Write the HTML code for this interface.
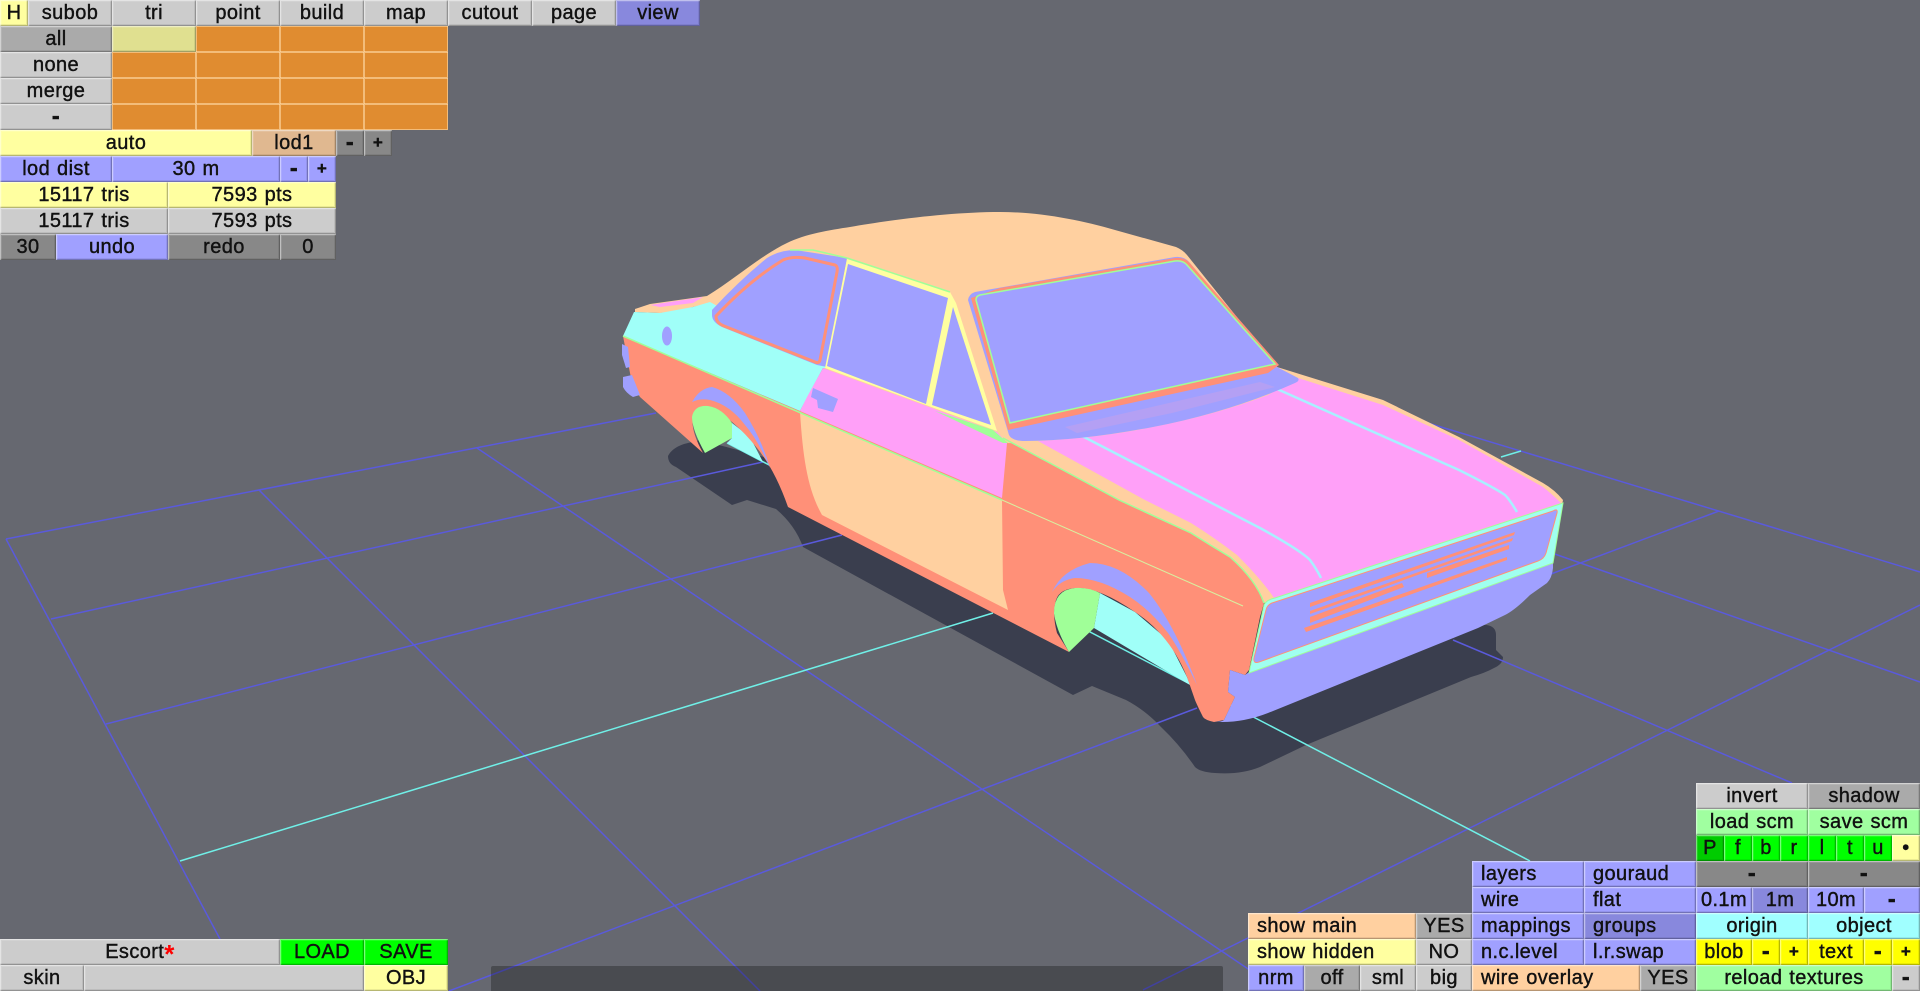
<!DOCTYPE html>
<html><head><meta charset="utf-8"><title>Escort</title>
<style>
html,body{margin:0;padding:0;width:1920px;height:991px;overflow:hidden;background:#666870}
svg{position:absolute;left:0;top:0}
.b{position:absolute;height:26px;box-sizing:border-box;text-align:center;font:20px/26px "Liberation Sans",sans-serif;letter-spacing:.4px;word-spacing:1px;color:#111;-webkit-text-stroke:.4px #111;white-space:nowrap;overflow:hidden;box-shadow:inset 1px 1px 0 rgba(255,255,255,.4),inset -1px -1px 0 rgba(0,0,0,.22),inset 2px 2px 0 rgba(255,255,255,.12),inset -2px -2px 0 rgba(0,0,0,.08)}
.g{background:#ccc}.d{background:#aaa}.k{background:#888}.y{background:#ffffa0}.l{background:#a0a0ff}.a{background:#8888dd}
.o{background:#e08c30;box-shadow:inset 1px 1px 0 rgba(255,220,170,.6),inset -1px -1px 0 rgba(255,220,170,.6)}.p{background:#ffd0a0}.t{background:#e0b890}.n{background:#a0ffa0}
.c{background:#a0ffff}.f{background:#00ff00}.q{background:#00cc00}.v{background:#ffff00}.e{background:#e0e090}
.L{text-align:left;padding-left:9px}
.m{font-weight:bold;font-size:24px;line-height:25px}
.z{font-weight:bold;font-size:17px}
#bar{position:absolute;left:491px;top:966px;width:732px;height:25px;background:rgba(0,0,0,.28);border-radius:2px 2px 0 0}
</style></head><body>
<svg width="1920" height="991" viewBox="0 0 1920 991" xmlns="http://www.w3.org/2000/svg">
<path fill="#3a3e4e" d="M668 456Q672 448 684 444L700 440L1300 600L1486 625Q1496 626 1496 635L1496 650L1503 657Q1503 664 1494 668Q1485 673 1471 677L1306 745L1260 767Q1240 775 1215 773Q1200 772 1195 767Q1180 745 1161 727Q1145 710 1126 700L1092 686L1073 695L803 547Q795 525 776 509L747 500L732 505L676 467Q668 464 668 456Z"/>
<g fill="none" stroke="#5a5adc" stroke-width="1.5">
<path d="M6 539L656 413M6 539L220 939M51 619L763 462M106 724L842 535M449 991L1197 708M259 490L760 991M477 448L1260 977"/>
<path d="M1418 420L1920 572M1551 574L1719 511M1549 552L1920 682M1453 640L1792 783M1143 990L1920 605"/>
</g>
<g fill="none" stroke="#70f0e8" stroke-width="1.5">
<path d="M180 861L993 613M1501 457L1521 451M727 443L1530 861"/>
</g>
<!-- arch insides -->
<polygon fill="#a0fff8" points="732,423 750,437 763,462 727,443 732,438"/>
<polygon fill="#a0fff8" points="1100,593 1135,612 1168,640 1187,677 1190,685 1094,628"/>
<!-- salmon -->
<path fill="#ff9078" d="M623 336L800 411L1000 430L1119 495L1191 528Q1240 552 1256 587L1264 603L1260 617L1249 670L1245 675L1230 670L1228 692L1235 697L1224 720L1214 722Q1205 720 1203 717Q1197 705 1195 700L1187 677Q1170 635 1135 612Q1100 588 1078 588Q1060 588 1056 600Q1052 615 1057 633L1069 652L788 507Q775 470 757 448Q733 418 710 408Q695 405 693 415Q690 430 703 453L640 397Q632 385 630 373Z"/>
<!-- wheels -->
<path fill="#a0ff98" d="M705 453Q692 430 692 417Q694 405 708 406Q722 408 732 423L732 438Z"/>
<path fill="#a0ff98" d="M1069 652Q1056 630 1054 613Q1054 590 1075 588Q1088 587 1100 593L1094 628Z"/>
<!-- arch lips -->
<path fill="#a0a0ff" d="M692 402Q700 388 712 387Q730 392 745 413Q762 440 770 468Q758 440 745 425Q730 405 710 400Q700 398 692 402Z"/>
<path fill="#a0a0ff" d="M1052 592Q1062 570 1090 563Q1120 563 1149 593Q1175 625 1197 685Q1180 650 1168 633Q1150 610 1130 597Q1100 578 1075 578Q1060 580 1052 592Z"/>
<!-- rear lights -->
<polygon fill="#a0a0ff" points="622,344 628,347 630,367 626,368 622,355"/>
<path fill="#a0a0ff" d="M623 377L632 375L640 395L633 397Q626 393 623 387Z"/>
<!-- roof/peach -->
<path fill="#ffd0a0" d="M635 309L650 304L707 296C735 279 760 256 787 243C805 234 830 230 850 227C890 220 950 212 1000 212C1040 212 1080 220 1115 230L1176 247Q1183 250 1187 255L1277 367L1100 445L1005 443L823 368L710 303L693 307Q675 313 660 313L635 312Z"/>
<!-- rear deck pink sliver -->
<polygon fill="#ffa0f8" points="650,305 703,297 693,303 660,307"/>
<!-- cyan quarter -->
<polygon fill="#a0fff8" points="623,336 634,312 660,313 693,307 710,302 830,368 823,368 800,411"/>
<ellipse cx="667" cy="336" rx="5" ry="9.5" fill="#a0a0ff"/>
<!-- rear window -->
<path fill="#a0a0ff" d="M712 310Q740 280 767 258Q780 250 795 250L847 258L827 367L817 365L722 327Q712 322 712 315Z"/>
<path fill="#a0a0ff" stroke="#ff9078" stroke-width="3" d="M716 316Q750 280 783 260Q792 256 805 258L835 265Q838 266 837 272L820 360Q819 364 815 362L724 326Q716 323 716 316Z"/>
<!-- door -->
<polygon fill="#ffa0f8" points="823,368 997,432 1007,443 1002,498 800,411 807,397"/>
<path fill="#ffd0a0" d="M800 412L1002 500L1003 590L1008 610L822 515C808 490 803 460 800 412Z"/>
<polygon fill="#a0a0ff" points="813,388 838,399 833,412 818,408 817,400 811,397"/>
<polygon fill="#a0ff98" points="935,411 993,430 1008,443 1003,443"/>
<!-- side windows -->
<polygon fill="#ffffa0" points="847,259 950,292 956,303 997,431 825,368"/>
<polygon fill="#a0a0ff" points="848,264 948,298 926,404 827,366"/>
<polygon fill="#a0a0ff" points="953,307 991,425 932,405"/>
<path fill="none" stroke="#a0ff98" stroke-width="1.5" d="M790 250L813 250L847 258L950 292"/>
<!-- hood -->
<path fill="#ffd0a0" d="M1007 440L1277 367L1383 400L1459 437L1543 483Q1555 490 1563 500L1562 505L1274 600L1264 603Q1256 580 1230 557Q1210 545 1191 533L1119 500Z"/>
<path fill="#ffa0f8" d="M1038 441Q1100 438 1153 427Q1215 415 1268 395L1298 378L1383 405L1459 440L1543 487Q1553 495 1561 503L1274 598Q1262 580 1237 555Q1215 538 1191 523L1145 500Z"/>
<path fill="none" stroke="#a0ff98" stroke-width="1.5" d="M1003 438L1119 500L1191 533Q1210 545 1230 557Q1256 580 1264 603"/>
<path fill="none" stroke="#a8f0ff" stroke-width="2.5" d="M1082 436L1260 528Q1300 550 1310 560Q1316 568 1321 578M1277 389L1459 470Q1495 488 1505 495Q1510 500 1517 512"/>
<!-- belt line -->
<path fill="none" stroke="#a0ff98" stroke-width="1.5" d="M623 336L1002 500"/>
<path fill="none" stroke="#d8f0a0" stroke-width="1" d="M1002 500L1243 606"/>
<!-- windshield -->
<path fill="#a0a0ff" d="M968 300Q969 294 975 292L1175 257Q1184 256 1189 262L1277 367L1298 378Q1300 381 1295 383Q1230 412 1153 427Q1080 441 1025 441Q1012 441 1009 435Z"/>
<polygon fill="#b4a0f4" points="1065,427 1260,382 1275,387 1172,413 1077,433"/>
<path fill="#ff9078" d="M971 298L1000 288L1175 258Q1184 257 1189 262L1279 365L1268 373L1008 430Z"/>
<path fill="#a0a0ff" stroke="#a0ff98" stroke-width="1.5" d="M976 300Q976 296 980 295L1175 261Q1183 260 1187 265L1275 364L1010 423Z"/>
<!-- front -->
<path fill="#a0a0ff" d="M1249 672L1553 563L1553 568Q1552 578 1547 583L1530 595Q1515 610 1505 615L1478 628L1268 713Q1245 722 1222 722L1214 722Q1222 722 1224 720L1235 697L1228 692L1230 670L1245 675Z"/>
<path fill="#a0fff0" stroke="#a0ff98" stroke-width="1" d="M1563 503L1553 563L1249 673L1264 605Q1266 600 1275 598Z"/>
<path fill="#a0a0ff" stroke="#ff9078" stroke-width="1" d="M1553 511Q1558 508 1557 513L1546 553Q1544 559 1538 561L1259 662Q1253 664 1254 658L1266 610Q1267 605 1272 603Z"/>
<g fill="#ff9078">
<polygon points="1310,603 1515,532 1514,535 1310,607"/>
<polygon points="1310,611 1513,538 1512,541 1310,614"/>
<polygon points="1310,617 1402,583 1404,587 1310,623"/>
<polygon points="1427,573 1509,545 1509,549 1427,578"/>
<polygon points="1304,628 1507,557 1507,560 1306,632"/>
</g>
</svg>
<div id="bar"></div>

<div class="b y" style="left:0;top:0;width:28px">H</div>
<div class="b g" style="left:28px;top:0;width:84px">subob</div>
<div class="b g" style="left:112px;top:0;width:84px">tri</div>
<div class="b g" style="left:196px;top:0;width:84px">point</div>
<div class="b g" style="left:280px;top:0;width:84px">build</div>
<div class="b g" style="left:364px;top:0;width:84px">map</div>
<div class="b g" style="left:448px;top:0;width:84px">cutout</div>
<div class="b g" style="left:532px;top:0;width:84px">page</div>
<div class="b a" style="left:616px;top:0;width:84px">view</div>

<div class="b d" style="left:0;top:26px;width:112px">all</div>
<div class="b g" style="left:0;top:52px;width:112px">none</div>
<div class="b g" style="left:0;top:78px;width:112px">merge</div>
<div class="b g m" style="left:0;top:104px;width:112px">-</div>

<div class="b e" style="left:112px;top:26px;width:84px"></div>
<div class="b o" style="left:196px;top:26px;width:84px"></div>
<div class="b o" style="left:280px;top:26px;width:84px"></div>
<div class="b o" style="left:364px;top:26px;width:84px"></div>
<div class="b o" style="left:112px;top:52px;width:84px"></div>
<div class="b o" style="left:196px;top:52px;width:84px"></div>
<div class="b o" style="left:280px;top:52px;width:84px"></div>
<div class="b o" style="left:364px;top:52px;width:84px"></div>
<div class="b o" style="left:112px;top:78px;width:84px"></div>
<div class="b o" style="left:196px;top:78px;width:84px"></div>
<div class="b o" style="left:280px;top:78px;width:84px"></div>
<div class="b o" style="left:364px;top:78px;width:84px"></div>
<div class="b o" style="left:112px;top:104px;width:84px"></div>
<div class="b o" style="left:196px;top:104px;width:84px"></div>
<div class="b o" style="left:280px;top:104px;width:84px"></div>
<div class="b o" style="left:364px;top:104px;width:84px"></div>

<div class="b y" style="left:0;top:130px;width:252px">auto</div>
<div class="b t" style="left:252px;top:130px;width:84px">lod1</div>
<div class="b k m" style="left:336px;top:130px;width:28px">-</div>
<div class="b k z" style="left:364px;top:130px;width:28px">+</div>

<div class="b l" style="left:0;top:156px;width:112px">lod dist</div>
<div class="b l" style="left:112px;top:156px;width:168px">30 m</div>
<div class="b l m" style="left:280px;top:156px;width:28px">-</div>
<div class="b l z" style="left:308px;top:156px;width:28px">+</div>

<div class="b y" style="left:0;top:182px;width:168px">15117 tris</div>
<div class="b y" style="left:168px;top:182px;width:168px">7593 pts</div>
<div class="b g" style="left:0;top:208px;width:168px">15117 tris</div>
<div class="b g" style="left:168px;top:208px;width:168px">7593 pts</div>

<div class="b k" style="left:0;top:234px;width:56px">30</div>
<div class="b l" style="left:56px;top:234px;width:112px">undo</div>
<div class="b k" style="left:168px;top:234px;width:112px">redo</div>
<div class="b k" style="left:280px;top:234px;width:56px">0</div>

<div class="b g" style="left:0;top:939px;width:280px">Escort<span style="color:#f00;-webkit-text-stroke:0;font-weight:bold;font-size:26px;position:relative;top:5px;line-height:10px">*</span></div>
<div class="b f" style="left:280px;top:939px;width:84px">LOAD</div>
<div class="b f" style="left:364px;top:939px;width:84px">SAVE</div>
<div class="b g" style="left:0;top:965px;width:84px">skin</div>
<div class="b g" style="left:84px;top:965px;width:280px"></div>
<div class="b y" style="left:364px;top:965px;width:84px">OBJ</div>

<div class="b p L" style="left:1248px;top:913px;width:168px">show main</div>
<div class="b d" style="left:1416px;top:913px;width:56px">YES</div>
<div class="b y L" style="left:1248px;top:939px;width:168px">show hidden</div>
<div class="b g" style="left:1416px;top:939px;width:56px">NO</div>
<div class="b l" style="left:1248px;top:965px;width:56px">nrm</div>
<div class="b d" style="left:1304px;top:965px;width:56px">off</div>
<div class="b g" style="left:1360px;top:965px;width:56px">sml</div>
<div class="b g" style="left:1416px;top:965px;width:56px">big</div>

<div class="b l L" style="left:1472px;top:861px;width:112px">layers</div>
<div class="b l L" style="left:1584px;top:861px;width:112px">gouraud</div>
<div class="b l L" style="left:1472px;top:887px;width:112px">wire</div>
<div class="b l L" style="left:1584px;top:887px;width:112px">flat</div>
<div class="b l L" style="left:1472px;top:913px;width:112px">mappings</div>
<div class="b a L" style="left:1584px;top:913px;width:112px">groups</div>
<div class="b l L" style="left:1472px;top:939px;width:112px">n.c.level</div>
<div class="b l L" style="left:1584px;top:939px;width:112px">l.r.swap</div>
<div class="b p L" style="left:1472px;top:965px;width:168px">wire overlay</div>
<div class="b d" style="left:1640px;top:965px;width:56px">YES</div>

<div class="b g" style="left:1696px;top:783px;width:112px">invert</div>
<div class="b d" style="left:1808px;top:783px;width:112px">shadow</div>
<div class="b n" style="left:1696px;top:809px;width:112px">load scm</div>
<div class="b n" style="left:1808px;top:809px;width:112px">save scm</div>
<div class="b q" style="left:1696px;top:835px;width:28px">P</div>
<div class="b f" style="left:1724px;top:835px;width:28px">f</div>
<div class="b f" style="left:1752px;top:835px;width:28px">b</div>
<div class="b f" style="left:1780px;top:835px;width:28px">r</div>
<div class="b f" style="left:1808px;top:835px;width:28px">l</div>
<div class="b f" style="left:1836px;top:835px;width:28px">t</div>
<div class="b f" style="left:1864px;top:835px;width:28px">u</div>
<div class="b y" style="left:1892px;top:835px;width:28px">•</div>
<div class="b k m" style="left:1696px;top:861px;width:112px">-</div>
<div class="b k m" style="left:1808px;top:861px;width:112px">-</div>
<div class="b l" style="left:1696px;top:887px;width:56px">0.1m</div>
<div class="b a" style="left:1752px;top:887px;width:56px">1m</div>
<div class="b l" style="left:1808px;top:887px;width:56px">10m</div>
<div class="b l m" style="left:1864px;top:887px;width:56px">-</div>
<div class="b c" style="left:1696px;top:913px;width:112px">origin</div>
<div class="b c" style="left:1808px;top:913px;width:112px">object</div>
<div class="b v" style="left:1696px;top:939px;width:56px">blob</div>
<div class="b v m" style="left:1752px;top:939px;width:28px">-</div>
<div class="b v z" style="left:1780px;top:939px;width:28px">+</div>
<div class="b v" style="left:1808px;top:939px;width:56px">text</div>
<div class="b v m" style="left:1864px;top:939px;width:28px">-</div>
<div class="b v z" style="left:1892px;top:939px;width:28px">+</div>
<div class="b n" style="left:1696px;top:965px;width:196px">reload textures</div>
<div class="b g m" style="left:1892px;top:965px;width:28px">-</div>
</body></html>
